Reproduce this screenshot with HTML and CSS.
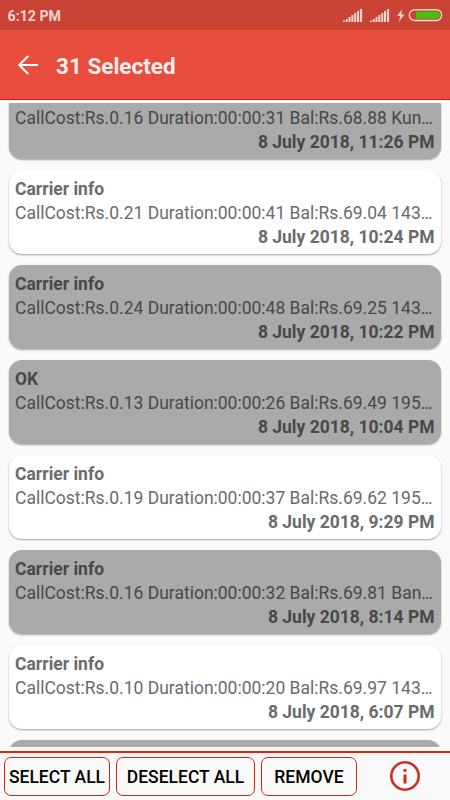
FILE: index.html
```html
<!DOCTYPE html>
<html lang="en">
<head>
  <meta charset="utf-8">
  <title>31 Selected</title>
  <link rel="stylesheet" href="styles.css">
</head>
<body>
  <div class="status-bar">
    <span class="clock">6:12 PM</span>
    <svg class="status-icons" width="102" height="16" viewBox="0 0 102 16">
      <g fill="#f5d3cf">
        <path id="signal" d="M1 12.600h2v1.400H1zM3.800 11h2v3h-2zM6.600 9h2v5h-2zM9.400 7h2v7h-2zM12.200 5h2v9h-2zM15 3h2v11h-2zM17.900 1h2.200v13h-2.200z"/>
        <use href="#signal" x="27"/>
        <path d="M60 1.200L55.200 8h3l-1.200 5.500L62.500 6.500h-3.300z"/>
      </g>
      <rect x="67.300" y="1.700" width="32.400" height="10.800" rx="5.400" fill="none" stroke="#f5d3cf" stroke-width="1.400"/>
      <path d="M74 3.500h20.500a3.600 3.600 0 0 1 0 7.200H74z" fill="#45c004"/>
    </svg>
  </div>

  <div class="toolbar">
    <svg class="back" width="20" height="20" viewBox="0 0 20 20" fill="none" stroke="#fff" stroke-width="2.200">
      <path d="M20 10H1.500M10.200 1L1.200 10l9 9"/>
    </svg>
    <h1>31 Selected</h1>
  </div>

  <div class="list">
    <div class="card selected">
      <p>CallCost:Rs.0.16 Duration:00:00:31 Bal:Rs.68.88 Kun…</p>
      <b class="date">8 July 2018, 11:26 PM</b>
    </div>
    <div class="card">
      <b>Carrier info</b>
      <p>CallCost:Rs.0.21 Duration:00:00:41 Bal:Rs.69.04 143…</p>
      <b class="date">8 July 2018, 10:24 PM</b>
    </div>
    <div class="card selected">
      <b>Carrier info</b>
      <p>CallCost:Rs.0.24 Duration:00:00:48 Bal:Rs.69.25 143…</p>
      <b class="date">8 July 2018, 10:22 PM</b>
    </div>
    <div class="card selected">
      <b>OK</b>
      <p>CallCost:Rs.0.13 Duration:00:00:26 Bal:Rs.69.49 195…</p>
      <b class="date">8 July 2018, 10:04 PM</b>
    </div>
    <div class="card">
      <b>Carrier info</b>
      <p>CallCost:Rs.0.19 Duration:00:00:37 Bal:Rs.69.62 195…</p>
      <b class="date">8 July 2018, 9:29 PM</b>
    </div>
    <div class="card selected">
      <b>Carrier info</b>
      <p>CallCost:Rs.0.16 Duration:00:00:32 Bal:Rs.69.81 Ban…</p>
      <b class="date">8 July 2018, 8:14 PM</b>
    </div>
    <div class="card">
      <b>Carrier info</b>
      <p>CallCost:Rs.0.10 Duration:00:00:20 Bal:Rs.69.97 143…</p>
      <b class="date">8 July 2018, 6:07 PM</b>
    </div>
    <div class="card selected"></div>
  </div>

  <div class="actions">
    <button class="select-all">SELECT ALL</button>
    <button class="deselect-all">DESELECT ALL</button>
    <button class="remove">REMOVE</button>
    <svg class="info" width="30" height="30" viewBox="0 0 30 30">
      <circle cx="15" cy="15" r="13.700" fill="none" stroke="#cc2d20" stroke-width="2.600"/>
      <path d="M13.500 8h3v2.800h-3zM13.500 13.500h3v9h-3z" fill="#cc2d20"/>
    </svg>
  </div>
</body>
</html>
```

FILE: styles.css
```css
:root {
  --primary: #e84c3d;
  --primary-dark: #c94335;
  --line: #e02010;
  --background: #fafafa;
}

* {
  box-sizing: border-box;
}

body {
  margin: 0;
  height: 800px;
  display: flex;
  flex-direction: column;
  overflow: hidden;
  background-color: var(--background);
  font-family: Roboto, "Liberation Sans", sans-serif;
}

.status-bar {
  height: 30px;
  flex: none;
  display: flex;
  align-items: center;
  justify-content: space-between;
  padding: 2px 6px 0 7.5px;
  background-color: var(--primary-dark);
  color: #f5d3cf;
}

.clock {
  font-size: 14.2px;
  font-weight: 700;
}

.toolbar {
  height: 70px;
  flex: none;
  display: flex;
  align-items: center;
  padding: 1px 18px 0;
  background-color: var(--primary);
  border-bottom: 1px solid #dc1c08;
}

.toolbar h1 {
  margin: 2px 0 0 18px;
  font-size: 22.5px;
  font-weight: 700;
  color: #ffefed;
}

.list {
  height: 644px;
  flex: none;
  margin-top: 3px;
  padding: 0 9px;
  overflow: hidden;
}

.card {
  height: 84px;
  margin-bottom: 11px;
  padding: 7px 6px 0;
  border-radius: 13px;
  background-color: #fff;
  box-shadow: 0 1px 2px rgba(0, 0, 0, 0.35);
  color: #6b6b6b;
  font-size: 17.5px;
  line-height: 24px;
}

/* the list is scrolled part way into the first card */
.card:first-child {
  height: 56px;
  padding-top: 3px;
  border-top-left-radius: 0;
  border-top-right-radius: 0;
}

.card.selected {
  background-color: #aaa;
  color: #484848;
}

.card b {
  display: block;
  font-weight: 700;
}

.card p {
  margin: 0;
  white-space: nowrap;
}

.card .date {
  padding-right: 0.5px;
  text-align: right;
}

.actions {
  flex: 1;
  display: flex;
  align-items: flex-start;
  margin-top: 4px;
  padding: 4px 4px 0;
  border-top: 2px solid #e02508;
}

.actions button {
  height: 39px;
  margin: 0 6px 0 0;
  padding: 1px 0 0;
  border: 1px solid var(--line);
  border-radius: 7px;
  background: none;
  color: #000;
  font-family: inherit;
  font-size: 17.5px;
  font-weight: 500;
  white-space: nowrap;
}

.select-all {
  width: 106px;
}

.deselect-all {
  width: 139px;
}

.remove {
  width: 96px;
}

.info {
  margin: 4px 0 0 27px;
}
```
